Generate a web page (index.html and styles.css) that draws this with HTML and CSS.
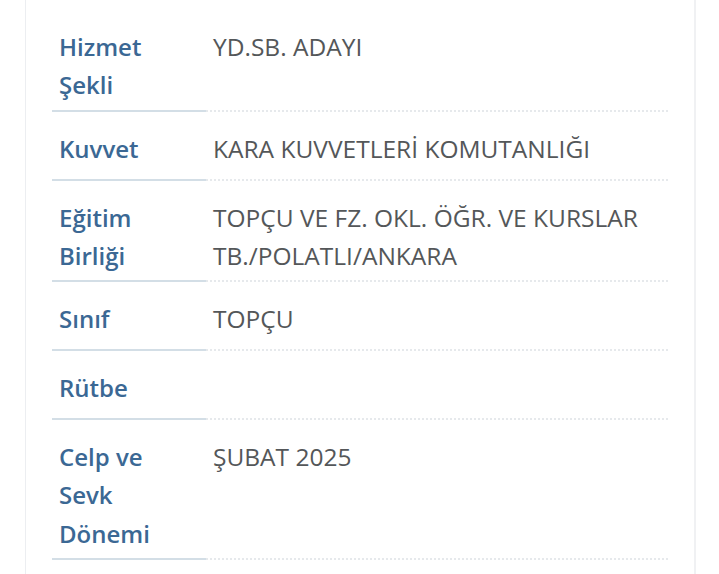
FILE: index.html
```html
<!DOCTYPE html>
<html lang="tr">
<head>
  <meta charset="UTF-8">
  <meta name="viewport" content="width=device-width, initial-scale=1.0">
  <title>Askerlik Bilgileri</title>
  <link rel="stylesheet" href="styles.css">
</head>
<body>
  <div class="card">
    <div class="info-table">
      <div class="info-row">
        <div class="info-label">Hizmet Şekli</div>
        <div class="info-value">YD.SB. ADAYI</div>
      </div>
      <div class="info-row">
        <div class="info-label">Kuvvet</div>
        <div class="info-value">KARA KUVVETLERİ KOMUTANLIĞI</div>
      </div>
      <div class="info-row">
        <div class="info-label">Eğitim Birliği</div>
        <div class="info-value">TOPÇU VE FZ. OKL. ÖĞR. VE KURSLAR TB./POLATLI/ANKARA</div>
      </div>
      <div class="info-row">
        <div class="info-label">Sınıf</div>
        <div class="info-value">TOPÇU</div>
      </div>
      <div class="info-row">
        <div class="info-label">Rütbe</div>
        <div class="info-value"></div>
      </div>
      <div class="info-row">
        <div class="info-label">Celp ve Sevk Dönemi</div>
        <div class="info-value">ŞUBAT 2025</div>
      </div>
    </div>
  </div>
</body>
</html>
```

FILE: styles.css
```css
* {
  margin: 0;
  padding: 0;
  box-sizing: border-box;
}

body {
  font-family: "Open Sans", "Noto Sans", sans-serif;
  background: #ffffff;
  min-height: 100vh;
  overflow: hidden;
}

.card {
  margin-left: 25px;
  width: 671px;
  min-height: 574px;
  border-left: 1px solid #eceef1;
  border-right: 2px solid #f0f1f3;
  padding: 10px 26px 0 26px;
}

.info-table {
  width: 616px;
}

.info-row {
  display: grid;
  grid-template-columns: 154px 1fr;
}

.info-label,
.info-value {
  line-height: 38.3px;
  padding: 18px 7px 5px 7px;
  min-height: 69px;
}

.info-label {
  font-size: 24px;
  color: #3b6894;
  font-weight: 600;
  border-bottom: 2px solid #d3dee6;
}

.info-value {
  font-size: 24.5px;
  color: #545759;
  border-bottom: 2px dotted #e6e9ec;
}
```
